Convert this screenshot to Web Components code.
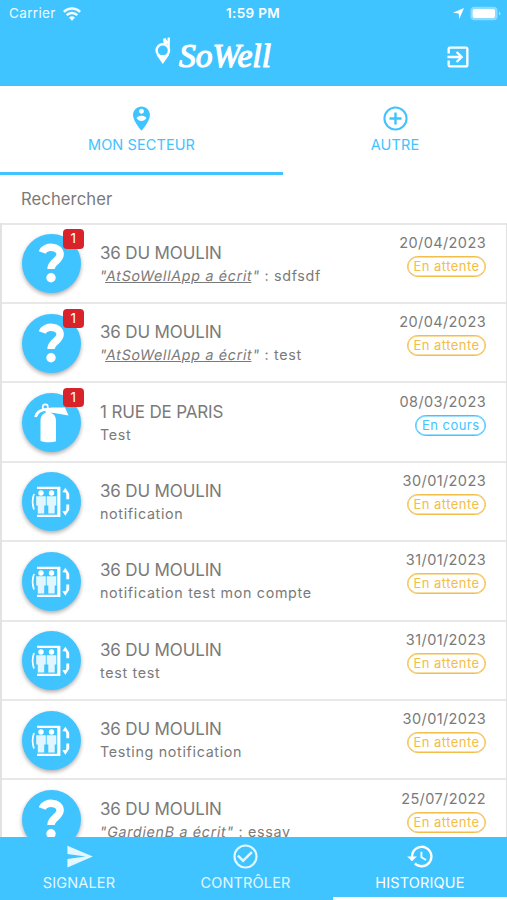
<!DOCTYPE html>
<html lang="fr">
<head>
<meta charset="utf-8">
<title>SoWell</title>
<style>
  body {
    margin: 0;
    width: 507px;
    height: 900px;
    overflow: hidden;
    background: #fff;
    font-family: Inter, "Liberation Sans", sans-serif;
    color: #7a7a7a;
    --blue: #40c4ff;
    --amber: #f2bd48;
  }
</style>
</head>
<body>
<sowell-app></sowell-app>

<script>
// icon markup, shared by every element below
const icons = {
  exit: '<path d="M10.09 15.59L11.5 17l5-5-5-5-1.41 1.41L12.67 11H3v2h9.67l-2.58 2.59zM19 3H5a2 2 0 0 0-2 2v4h2V5h14v14H5v-4H3v4a2 2 0 0 0 2 2h14c1.100 0 2-.9 2-2V5c0-1.100-.9-2-2-2z"/>',
  pin: '<path d="M12 2C8.140 2 5 5.140 5 9c0 5.250 7 13 7 13s7-7.750 7-13c0-3.860-3.140-7-7-7zm0 2c1.100 0 2 .9 2 2s-.9 2-2 2-2-.9-2-2 .9-2 2-2zm0 10c-1.670 0-3.140-.850-4-2.150.020-1.320 2.670-2.050 4-2.050s3.980.730 4 2.050c-.860 1.300-2.330 2.150-4 2.150z"/>',
  add: '<path d="M13 7h-2v4H7v2h4v4h2v-4h4v-2h-4V7zM12 2a10 10 0 1 0 0 20 10 10 0 0 0 0-20zm0 18.300a8.300 8.300 0 1 1 0-16.600 8.300 8.300 0 0 1 0 16.600z"/>',
  send: '<path d="M2.010 21L23 12 2.010 3 2 10l15 2-15 2z"/>',
  check: '<path d="M16.590 7.580L10 14.170l-3.590-3.580L5 12l5 5 8-8zM12 2a10 10 0 1 0 0 20 10 10 0 0 0 0-20zm0 18.200a8.200 8.200 0 1 1 0-16.400 8.200 8.200 0 0 1 0 16.400z"/>',
  history: '<path d="M13 3a9 9 0 0 0-9 9H1l3.890 3.890.070.140L9 12H6a7 7 0 1 1 2.060 4.940l-1.420 1.420A9 9 0 1 0 13 3zm-1 5v5l4.280 2.540.720-1.210-3.500-2.080V8H12z"/>'
}

const badges = {
  question: `
    <path d="M20.300 18.500C23 11.200 38.300 11.500 38.100 20.500c-.2 6.500-9.100 7.300-9.100 14.500" fill="none" stroke="#fff" stroke-width="7.500"/>
    <circle cx="29" cy="43.800" r="4.700"/>`,
  extinguisher: `
    <path d="M18.500 28c0-5 2.500-7.500 5-8v-4h5v4c3 .5 5.500 3 5.500 8v20.300c-4 1.500-11.500 1.500-15.500-.5z"/>
    <circle cx="23.300" cy="14" r="2.600" fill="none" stroke="#fff" stroke-width="1.600"/>
    <path d="M13.500 24C15 18.500 20 16.200 26 16.400" fill="none" stroke="#fff" stroke-width="2.800"/>
    <path d="M25 15l5.500-.6L43 14.500l3.500 8L32 20l-7-.5z"/>`,
  lift: `
    <path d="M15 15.800h22v28H15" fill="none" stroke="#fff" stroke-width="2.300"/>
    <path d="M36.800 15v30" stroke="#fff" stroke-width="3"/>
    <path d="M12 22c-1.600 4.500-1.600 11 0 15.500" fill="none" stroke="#fff" stroke-width="1.700"/>
    <circle cx="19" cy="21" r="2.700"/>
    <path d="M14.200 24.300h9.600v9.200h-1.600v8h-6.400v-8h-1.600z" opacity=".85"/>
    <circle cx="29.500" cy="21" r="2.700"/>
    <path d="M24.700 24.300h9.600v9.200h-1.600v8h-6.400v-8h-1.600z" opacity=".85"/>
    <path d="M43.300 15.800l-3 4.500h1.700c2 0 2.300.8 2.300 2.500v4.400h2.900v-5.400l-.9-1.500zM43.300 43.800l-3-4.500h1.700c2 0 2.300-.8 2.300-2.500v-4.400h2.900v5.400l-.9 1.500z"/>`
}

const svg = (name, size) => `<svg width="${size}" height="${size}" viewBox="0 0 24 24" fill="currentColor">${icons[name]}</svg>`

class StatusBar extends HTMLElement {
  constructor() {
    super()
    this.attachShadow({ mode: 'open' }).innerHTML = `
<style>
  :host { display: grid; grid-template-columns: 1fr auto 1fr; align-items: center; height: 27px; padding: 0 6px 0 9px; color: #fff; font-size: 13.500px; line-height: 27px; }
  .left, .right { display: flex; align-items: center; gap: 7px; }
  .left { letter-spacing: .35px; opacity: .93; }
  .right { justify-content: flex-end; gap: 6px; }
  .time { padding-right: 4px; font-weight: 600; letter-spacing: .35px; }
  svg { display: block; }
</style>
<div class="left"><span>Carrier</span>
  <svg width="18" height="14" viewBox="0 0 18 14" fill="none" stroke="#fff" stroke-width="2.500"><path d="M.8 4.900a11.800 11.800 0 0 1 16.400 0M3.700 8.200a7.600 7.600 0 0 1 10.600 0"/><path d="M9 13.800L6 10.800a4.300 4.300 0 0 1 6 0z" fill="#fff" stroke="none"/></svg>
</div>
<span class="time">1:59 PM</span>
<div class="right">
  <svg width="11" height="11" viewBox="0 0 11 11" fill="#fff"><path d="M11 0L6.300 11 5.700 5.400 0 4.800z"/></svg>
  <svg width="31" height="15" viewBox="0 0 31 15"><rect x=".5" y=".7" width="27" height="13.600" rx="4" fill="#8bdbff"/><rect x="2.700" y="3" width="22.300" height="9" rx="2" fill="#fff"/><path d="M29 5.500q3 2 0 4z" fill="#a0e1ff"/></svg>
</div>`
  }
}

class AppHeader extends HTMLElement {
  constructor() {
    super()
    this.attachShadow({ mode: 'open' }).innerHTML = `
<style>
  :host { display: flex; align-items: center; justify-content: space-between; height: 59px; padding: 0 35px 0 153px; color: #fff; }
  .logo { display: flex; align-items: center; gap: 4px; }
  .mark { margin-bottom: 12px; }
  .name { overflow: visible; }
  svg { display: block; }
</style>
<div class="logo">
  <svg class="mark" width="20" height="30" viewBox="0 0 20 30" fill="none" stroke="#fff" stroke-width="2.400" stroke-linejoin="round">
    <circle cx="9.800" cy="14.500" r="6.200"/>
    <path d="M3.500 19h12.600L9.800 28z" fill="#fff" stroke="none"/>
    <path d="M12 9L11.200 2.500M15.500 12L15.800 1.500M11.200 2.500l3.300 5"/>
  </svg>
  <svg class="name" width="98" height="40" viewBox="0 0 98 40"><text x="2" y="29.500" textLength="92" lengthAdjust="spacingAndGlyphs" fill="#fff" stroke="#fff" stroke-width="1.200" stroke-linejoin="round" font-family="'Liberation Serif', cursive" font-size="34" font-style="italic">SoWell</text></svg>
</div>
${svg('exit', 28)}`
  }
}

class TabItem extends HTMLElement {
  constructor() {
    super()
    this.attachShadow({ mode: 'open' }).innerHTML = `
<style>
  :host { display: flex; flex-direction: column; align-items: center; box-sizing: border-box; height: 88.500px; padding-top: 17.500px; border-bottom: 3px solid transparent; color: var(--blue); }
  :host([active]) { border-color: var(--blue); }
  svg { display: block; }
  span { font-size: 14.500px; line-height: 20px; margin-top: 2px; letter-spacing: .1px; }
</style>
${svg(this.getAttribute('icon'), 29)}<span><slot></slot></span>`
  }
}

class NavItem extends HTMLElement {
  constructor() {
    super()
    this.attachShadow({ mode: 'open' }).innerHTML = `
<style>
  :host { display: flex; flex-direction: column; align-items: center; box-sizing: border-box; padding-top: 5px; border-bottom: 3px solid transparent; color: #e3f7ff; }
  :host([active]) { border-color: #fff; color: #fff; }
  svg { display: block; }
  span { font-size: 14.500px; line-height: 20px; margin-top: 2px; letter-spacing: .15px; }
</style>
${svg(this.getAttribute('icon'), 29)}<span><slot></slot></span>`
  }
}

class StatusPill extends HTMLElement {
  constructor() {
    super()
    this.attachShadow({ mode: 'open' }).innerHTML = `
<style>
  :host { display: block; box-sizing: border-box; height: 21px; padding: 0 5.500px 0 6px; border: 1.500px solid; border-radius: 11px; box-shadow: inset 0 0 0 .5px; color: var(--amber); font-size: 13px; line-height: 19px; letter-spacing: .45px; }
  :host([state="cours"]) { color: var(--blue); }
</style>
<slot></slot>`
  }
}

class TicketItem extends HTMLElement {
  constructor() {
    super()
    const count = this.getAttribute('count')
    this.attachShadow({ mode: 'open' }).innerHTML = `
<style>
  :host { display: flex; box-sizing: border-box; height: 79.400px; padding: 0 20px 0 19.500px; border-top: 2px solid #e8e8e8; }
  .avatar { position: relative; flex: none; width: 59px; height: 59px; margin-top: 9.600px; border-radius: 50%; background: var(--blue); box-shadow: 0 2px 4px rgba(0,0,0,.33); }
  .avatar svg { display: block; }
  .count { position: absolute; left: 41px; top: -5px; width: 21.500px; height: 19.500px; border-radius: 4px; background: #d8232a; color: #fff; font-size: 13.500px; line-height: 19px; text-align: center; }
  .text { flex: 1; padding: 17.300px 0 0 19.500px; white-space: nowrap; }
  .title { font-size: 17px; line-height: 22px; letter-spacing: -.15px; }
  .message { font-size: 14.300px; line-height: 22px; margin-top: 1px; letter-spacing: .67px; }
  /* slanted upright letters, so that "a" keeps its two storeys */
  ::slotted(i) { display: inline-block; font-style: normal; transform: skewX(-10deg); }
  .side { display: flex; flex-direction: column; align-items: flex-end; padding-top: 8.300px; }
  .date { font-size: 14.500px; line-height: 20px; margin-bottom: 3px; letter-spacing: .4px; }
</style>
<div class="avatar">
  <svg width="59" height="59" viewBox="0 0 59 59" fill="#fff">${badges[this.getAttribute('icon')]}</svg>
  ${count ? `<div class="count">${count}</div>` : ''}
</div>
<div class="text">
  <div class="title">${this.getAttribute('place')}</div>
  <div class="message"><slot></slot></div>
</div>
<div class="side">
  <div class="date">${this.getAttribute('date')}</div>
  <status-pill state="${this.getAttribute('state')}">${this.getAttribute('state') === 'cours' ? 'En cours' : 'En attente'}</status-pill>
</div>`
  }
}

const tickets = [
  ['question', '36 DU MOULIN', '<i>"<u>AtSoWellApp a écrit</u>"</i> : sdfsdf', '20/04/2023', 'attente', 1],
  ['question', '36 DU MOULIN', '<i>"<u>AtSoWellApp a écrit</u>"</i> : test', '20/04/2023', 'attente', 1],
  ['extinguisher', '1 RUE DE PARIS', 'Test', '08/03/2023', 'cours', 1],
  ['lift', '36 DU MOULIN', 'notification', '30/01/2023', 'attente'],
  ['lift', '36 DU MOULIN', 'notification test mon compte', '31/01/2023', 'attente'],
  ['lift', '36 DU MOULIN', 'test test', '31/01/2023', 'attente'],
  ['lift', '36 DU MOULIN', 'Testing notification', '30/01/2023', 'attente'],
  ['question', '36 DU MOULIN', '<i>"GardienB a écrit"</i> : essay', '25/07/2022', 'attente']
]

class TicketList extends HTMLElement {
  constructor() {
    super()
    this.attachShadow({ mode: 'open' }).innerHTML = `
<style>
  :host { display: block; overflow: hidden; border: solid #e2e2e2; border-width: 0 1px 0 2px; }
</style>
${tickets.map(([icon, place, message, date, state, count]) =>
  `<ticket-item icon="${icon}" place="${place}" date="${date}" state="${state}" count="${count || ''}">${message}</ticket-item>`).join('')}`
  }
}

class SowellApp extends HTMLElement {
  constructor() {
    super()
    this.attachShadow({ mode: 'open' }).innerHTML = `
<style>
  :host { display: flex; flex-direction: column; height: 900px; }
  .top { flex: none; background: var(--blue); }
  .tabs { flex: none; display: grid; grid-template-columns: 283px 1fr; }
  .search { flex: none; height: 48.100px; padding-left: 21px; font-size: 16.600px; line-height: 49px; letter-spacing: .1px; }
  ticket-list { flex: 1; min-height: 0; }
  nav { flex: none; display: grid; grid-template-columns: 158px 175px 1fr; height: 63.500px; background: var(--blue); }
</style>
<div class="top"><status-bar></status-bar><app-header></app-header></div>
<div class="tabs"><tab-item icon="pin" active>MON SECTEUR</tab-item><tab-item icon="add">AUTRE</tab-item></div>
<div class="search">Rechercher</div>
<ticket-list></ticket-list>
<nav><nav-item icon="send">SIGNALER</nav-item><nav-item icon="check">CONTRÔLER</nav-item><nav-item icon="history" active>HISTORIQUE</nav-item></nav>`
  }
}

customElements.define('status-bar', StatusBar)
customElements.define('app-header', AppHeader)
customElements.define('tab-item', TabItem)
customElements.define('nav-item', NavItem)
customElements.define('status-pill', StatusPill)
customElements.define('ticket-item', TicketItem)
customElements.define('ticket-list', TicketList)
customElements.define('sowell-app', SowellApp)
</script>
</body>
</html>
